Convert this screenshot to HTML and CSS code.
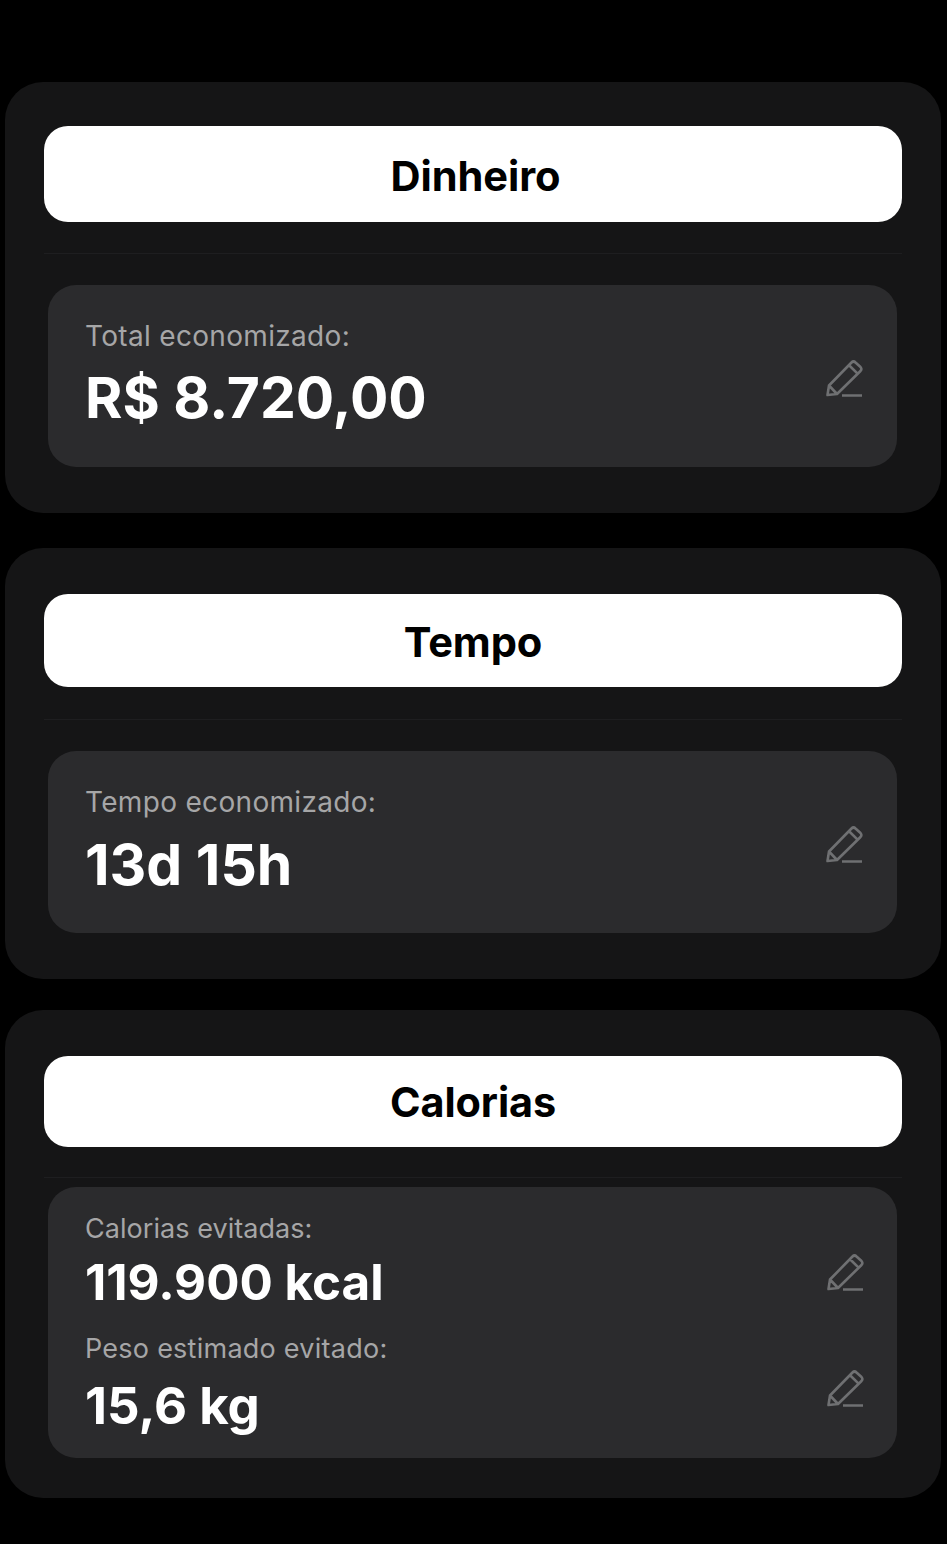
FILE: index.html
```html
<!DOCTYPE html>
<html lang="pt-BR">
<head>
<meta charset="utf-8">
<title>Economia</title>
<link rel="stylesheet" href="styles.css">
</head>
<body>
<svg class="defs" width="0" height="0" aria-hidden="true">
  <symbol id="pencil" viewBox="0 0 38 38">
    <path d="M1.5 36 L3 26.5 L25.5 3.5 Q27.5 1.5 29.5 3.5 L34.5 8 Q36.2 10 34.5 12 L11 35 Z M3 26.5 L11 35 M22.8 6 L31.6 14.6 M16 36.5 H36" fill="none" stroke="currentColor" stroke-width="2.6" stroke-linejoin="round"/>
  </symbol>
</svg>
<main class="page">
  <section class="card card-money">
    <h2 class="pill pill-money"><span class="nudge-money">Dinheiro</span></h2>
    <hr class="rule">
    <div class="panel panel-single">
      <div class="row">
        <div class="stat">
          <p class="label">Total economizado:</p>
          <p class="value value-large">R$ 8.720,00</p>
        </div>
        <svg class="edit"><use href="#pencil"/></svg>
      </div>
    </div>
  </section>
  <section class="card card-time">
    <h2 class="pill pill-time">Tempo</h2>
    <hr class="rule rule-time">
    <div class="panel panel-single">
      <div class="row">
        <div class="stat">
          <p class="label">Tempo economizado:</p>
          <p class="value value-time">13d 15h</p>
        </div>
        <svg class="edit"><use href="#pencil"/></svg>
      </div>
    </div>
  </section>
  <section class="card card-cal">
    <h2 class="pill pill-cal">Calorias</h2>
    <hr class="rule rule-cal">
    <div class="panel panel-double">
      <div class="row">
        <div class="stat">
          <p class="label label-small">Calorias evitadas:</p>
          <p class="value value-cal">119.900 kcal</p>
        </div>
        <svg class="edit edit-cal"><use href="#pencil"/></svg>
      </div>
      <div class="row">
        <div class="stat">
          <p class="label label-wide">Peso estimado evitado:</p>
          <p class="value value-weight">15,6 kg</p>
        </div>
        <svg class="edit edit-weight"><use href="#pencil"/></svg>
      </div>
    </div>
  </section>
</main>
</body>
</html>
```
FILE: styles.css
```css
* { box-sizing: border-box; }
html, body { margin: 0; padding: 0; background: #000; }
body { font-family: Inter, "Liberation Sans", sans-serif; width: 947px; height: 1544px; overflow: hidden; }
.defs { display: block; height: 0; }
.page { display: flex; flex-direction: column; padding: 82px 6px 0 5px; }
.card { background: #151516; border-radius: 38px; padding: 44px 39px 0 39px; display: flex; flex-direction: column; flex: none; }
.card-money { height: 431px; margin-bottom: 35px; }
.card-time { height: 431px; margin-bottom: 31px; padding-top: 46px; }
.card-cal { height: 488px; padding-top: 46px; }
.pill { margin: 0; flex: none; background: #fff; color: #000; border-radius: 24px; display: flex; align-items: center; justify-content: center; padding-top: 3px; font-size: 41.6px; font-weight: 700; letter-spacing: -0.1px; }
.pill-money { height: 96px; }
.pill-time { height: 93px; }
.pill-cal { height: 91px; font-size: 41.4px; padding-top: 1px; }
.nudge-money { margin-left: 5px; }
.rule { border: 0; flex: none; height: 1px; background: #1e1e20; margin: 31px 0; width: 858px; }
.rule-time { margin: 32px 0 31px; }
.rule-cal { margin: 30px 0 9px; }
.panel { margin: 0 5px 0 4px; flex: none; background: #2b2b2d; border-radius: 28px; padding: 0 34px 0 37px; display: flex; flex-direction: column; }
.panel-single { height: 182px; justify-content: center; }
.panel-double { height: 271px; padding-top: 25px; gap: 20px; }
.row { display: flex; align-items: center; justify-content: space-between; }
.stat { display: flex; flex-direction: column; }
.label { margin: 0; color: #a6a6a7; font-size: 28px; letter-spacing: 0.32px; line-height: 34px; font-weight: 400; }
.label-small { font-size: 27px; letter-spacing: 0.05px; }
.label-wide { font-size: 27px; letter-spacing: 0.25px; }
.value { margin: 0; color: #fff; font-weight: 700; }
.value-large { font-size: 57px; line-height: 70px; margin-top: 10px; }
.value-time { font-size: 57px; line-height: 70px; margin-top: 11px; }
.value-cal { font-size: 49.4px; line-height: 60px; margin-top: 6px; }
.value-weight { font-size: 51px; line-height: 60px; margin-top: 10px; }
.edit { width: 38px; height: 38px; color: #6f7072; flex: none; margin-top: 4px; margin-right: -1px; }
.edit-cal { margin-top: 20px; margin-right: -2px; }
.edit-weight { margin-top: 8px; margin-right: -2px; }
```
